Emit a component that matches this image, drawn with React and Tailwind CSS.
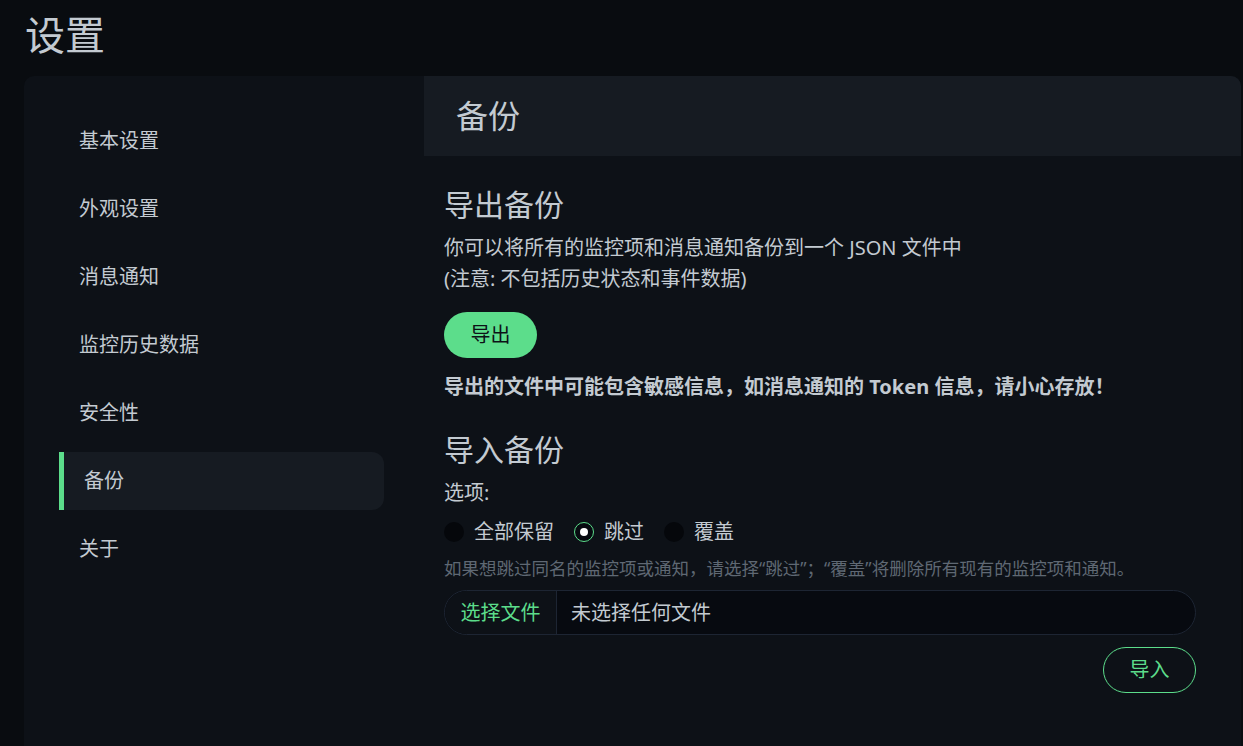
import { useState } from "react";

const menu = ["基本设置", "外观设置", "消息通知", "监控历史数据", "安全性", "备份", "关于"];

// --- Left menu ---
function SettingsMenu({ active }) {
  return (
    <div className="w-[400px] shrink-0 pt-[36px] pl-[35px] pr-[40px] flex flex-col gap-[10px]">
      {menu.map((item) =>
        item === active ? (
          <div
            key={item}
            className="h-[58px] flex items-center pl-[20px] border-l-[5px] border-[#5cdd8b] bg-[#161b22] rounded-r-[12px] text-[20px] text-[#c3cad1]"
          >
            {item}
          </div>
        ) : (
          <div key={item} className="h-[58px] flex items-center pl-[20px] text-[20px] text-[#c3cad1]">
            {item}
          </div>
        )
      )}
    </div>
  );
}

// --- Radio option ---
function Radio({ label, checked, onClick }) {
  return (
    <label className="flex items-center gap-[10px] cursor-pointer" onClick={onClick}>
      {checked ? (
        <span className="w-[20px] h-[20px] rounded-full border border-[#5cdd8b] bg-[#070a10] flex items-center justify-center">
          <span className="w-[8px] h-[8px] rounded-full bg-white" />
        </span>
      ) : (
        <span className="w-[20px] h-[20px] rounded-full bg-[#05070b]" />
      )}
      <span>{label}</span>
    </label>
  );
}

export default function App() {
  const [mode, setMode] = useState("skip");

  return (
    <div
      className="min-h-[746px] bg-[#090c10] text-[#c3cad1] overflow-hidden"
      style={{ fontFamily: '"Noto Sans", "Noto Sans CJK SC", sans-serif' }}
    >
      <h1 className="pl-[25px] pt-[11px] mb-[17px] text-[40px] leading-[48px] text-[#c3cad1]">设置</h1>

      <div className="ml-[24px] mr-[2px] bg-[#0d1117] rounded-t-[10px] flex min-h-[670px]">
        <SettingsMenu active="备份" />

        <div className="flex-1">
          <div className="h-[80px] bg-[#161b22] rounded-tr-[10px] flex items-center pl-[32px] text-[32px]">
            备份
          </div>

          <div className="pl-[20px] pr-[45px] pt-[31px]">
            <h4 className="text-[30px] leading-[36px] mb-[9px]">导出备份</h4>
            <p className="text-[20px] leading-[31px]">
              你可以将所有的监控项和消息通知备份到一个 JSON 文件中
              <br />
              (注意: 不包括历史状态和事件数据)
            </p>

            <button className="mt-[18px] h-[46px] w-[93px] rounded-full bg-[#5cdd8b] text-[#0d1117] text-[20px]">
              导出
            </button>

            <p className="mt-[14px] text-[20px] leading-[30px] font-bold">
              导出的文件中可能包含敏感信息，如消息通知的 Token 信息，请小心存放！
            </p>

            <h4 className="mt-[30px] text-[30px] leading-[36px]">导入备份</h4>
            <div className="mt-[10px] text-[20px] leading-[30px]">选项:</div>

            <div className="mt-[9px] h-[30px] flex items-center gap-[20px] text-[20px]">
              <Radio label="全部保留" checked={mode === "keep"} onClick={() => setMode("keep")} />
              <Radio label="跳过" checked={mode === "skip"} onClick={() => setMode("skip")} />
              <Radio label="覆盖" checked={mode === "overwrite"} onClick={() => setMode("overwrite")} />
            </div>

            <div className="mt-[8px] text-[17.5px] leading-[26px] text-[#5f6873]">
              如果想跳过同名的监控项或通知，请选择“跳过”；“覆盖”将删除所有现有的监控项和通知。
            </div>

            <div className="mt-[9px] h-[45px] flex items-stretch rounded-full border border-[#1d2533] bg-[#070a10] overflow-hidden text-[20px]">
              <div className="w-[112px] flex items-center justify-center bg-[#0d1117] border-r border-[#1d2533] text-[#5cdd8b]">
                选择文件
              </div>
              <div className="flex items-center pl-[14px] text-[#c3cad1]">未选择任何文件</div>
            </div>

            <div className="mt-[12px] flex justify-end">
              <button className="h-[46px] w-[93px] rounded-full border border-[#5cdd8b] text-[#5cdd8b] text-[20px]">
                导入
              </button>
            </div>
          </div>
        </div>
      </div>
    </div>
  );
}
